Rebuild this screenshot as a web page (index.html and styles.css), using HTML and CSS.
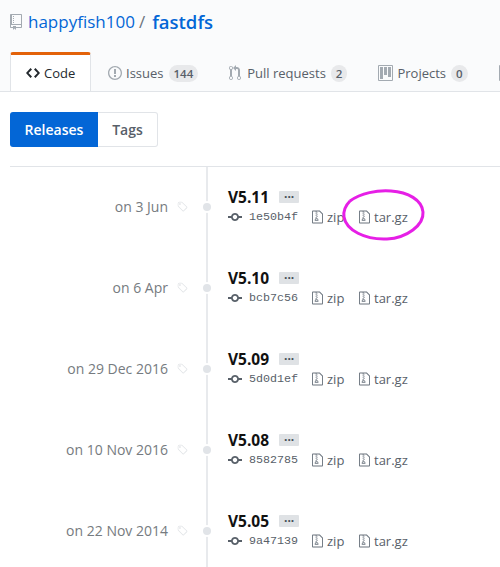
FILE: index.html
```html
<!DOCTYPE html>
<html lang="en">
<head>
    <meta charset="UTF-8">
    <meta name="viewport" content="width=device-width, initial-scale=1.0">
    <title>Releases - happyfish100/fastdfs</title>
    <link rel="stylesheet" href="styles.css">
</head>
<body>
<svg class="defs" aria-hidden="true">
    <symbol id="i-repo" viewBox="0 0 12 16"><path fill-rule="evenodd" d="M4 9H3V8h1v1zm0-3H3v1h1V6zm0-2H3v1h1V4zm0-2H3v1h1V2zm8-1v12c0 .55-.45 1-1 1H6v2l-1.5-1.5L3 16v-2H1c-.55 0-1-.45-1-1V1c0-.55.45-1 1-1h10c.55 0 1 .45 1 1zm-1 10H1v2h2v-1h3v1h5v-2zm0-10H2v9h9V1z"/></symbol>
    <symbol id="i-code" viewBox="0 0 14 16"><path fill-rule="evenodd" d="M9.5 3L8 4.5 11.5 8 8 11.5 9.5 13 14 8 9.5 3zm-5 0L0 8l4.5 5L6 11.5 2.5 8 6 4.5 4.5 3z"/></symbol>
    <symbol id="i-issue" viewBox="0 0 14 16"><path fill-rule="evenodd" d="M7 2.3c3.14 0 5.7 2.56 5.7 5.7s-2.56 5.7-5.7 5.7A5.71 5.71 0 0 1 1.3 8c0-3.14 2.56-5.7 5.7-5.7zM7 1C3.14 1 0 4.14 0 8s3.14 7 7 7 7-3.14 7-7-3.14-7-7-7zm1 3H6v5h2V4zm0 6H6v2h2v-2z"/></symbol>
    <symbol id="i-pull" viewBox="0 0 12 16"><path fill-rule="evenodd" d="M11 11.28V5c-.03-.78-.34-1.47-.94-2.06C9.46 2.35 8.78 2.03 8 2H7V0L4 3l3 3V4h1c.27.02.48.11.69.31.21.2.3.42.31.69v6.28A1.993 1.993 0 0 0 10 15a1.993 1.993 0 0 0 1-3.72zm-1 2.92c-.66 0-1.2-.55-1.2-1.2 0-.65.55-1.2 1.2-1.2.65 0 1.2.55 1.2 1.2 0 .65-.55 1.2-1.2 1.2zM4 3c0-1.11-.89-2-2-2a1.993 1.993 0 0 0-1 3.72v6.56A1.993 1.993 0 0 0 2 15a1.993 1.993 0 0 0 1-3.72V4.72c.59-.34 1-.98 1-1.72zm-.8 10c0 .66-.55 1.2-1.2 1.2-.65 0-1.2-.55-1.2-1.2 0-.65.55-1.2 1.2-1.2.65 0 1.2.55 1.2 1.2zM2 4.2C1.34 4.2.8 3.65.8 3c0-.65.55-1.2 1.2-1.2.65 0 1.2.55 1.2 1.2 0 .65-.55 1.2-1.2 1.2z"/></symbol>
    <symbol id="i-project" viewBox="0 0 15 16"><path fill-rule="evenodd" d="M10 12h3V2h-3v10zm-4-2h3V2H6v8zm-4 4h3V2H2v12zm-1 1h13V1H1v14zM14 0H1a1 1 0 0 0-1 1v14a1 1 0 0 0 1 1h13a1 1 0 0 0 1-1V1a1 1 0 0 0-1-1z"/></symbol>
    <symbol id="i-tag" viewBox="0 0 15 16"><path fill-rule="evenodd" d="M7.73 1.73C7.26 1.26 6.62 1 5.96 1H3.5C2.13 1 1 2.13 1 3.5v2.47c0 .66.27 1.3.73 1.77l6.06 6.06c.39.39 1.02.39 1.41 0l4.59-4.59a.996.996 0 0 0 0-1.41L7.73 1.73zM2.38 7.09c-.31-.3-.47-.7-.47-1.13V3.5c0-.88.72-1.59 1.59-1.59h2.47c.42 0 .83.16 1.13.47l6.14 6.13-4.73 4.73-6.13-6.15zM3.01 3h2v2H3V3h.01z"/></symbol>
    <symbol id="i-commit" viewBox="0 0 14 16"><path fill-rule="evenodd" d="M10.86 7c-.45-1.72-2-3-3.86-3-1.86 0-3.41 1.28-3.86 3H0v2h3.14c.45 1.72 2 3 3.86 3 1.86 0 3.41-1.28 3.86-3H14V7h-3.14zM7 10.2c-1.22 0-2.2-.98-2.2-2.2 0-1.22.98-2.2 2.2-2.2 1.22 0 2.2.98 2.2 2.2 0 1.22-.98 2.2-2.2 2.2z"/></symbol>
    <symbol id="i-zip" viewBox="0 0 12 16"><path fill-rule="evenodd" d="M8.5 1H1a1 1 0 0 0-1 1v12a1 1 0 0 0 1 1h10a1 1 0 0 0 1-1V4.5L8.5 1zM11 14H1V2h3v1h1V2h3l3 3v9zM5 4V3h1v1H5zM4 4h1v1H4V4zm1 2V5h1v1H5zM4 6h1v1H4V6zm1 2V7h1v1H5zM4 9.28A2 2 0 0 0 3 11v1h4v-1a2 2 0 0 0-2-2V8H4v1.28zM6 10v1H4v-1h2z"/></symbol>
</svg>

<!-- Repo header and tabs -->
<div class="repohead">
    <h1 class="repo-title">
        <svg class="icon icon-repo"><use href="#i-repo"/></svg>
        <a class="owner">happyfish100</a>
        <span class="slash">/</span>
        <a class="name">fastdfs</a>
    </h1>
    <nav class="tabs">
        <a class="tab selected"><svg class="icon icon-code"><use href="#i-code"/></svg>Code</a>
        <a class="tab"><svg class="icon icon-issue"><use href="#i-issue"/></svg>Issues<span class="counter">144</span></a>
        <a class="tab"><svg class="icon icon-pull"><use href="#i-pull"/></svg>Pull requests<span class="counter">2</span></a>
        <a class="tab"><svg class="icon icon-project"><use href="#i-project"/></svg>Projects<span class="counter">0</span></a>
        <a class="tab"><svg class="icon icon-project"><use href="#i-project"/></svg></a>
    </nav>
</div>

<div class="subnav">
    <a class="subnav-item active">Releases</a>
    <a class="subnav-item">Tags</a>
</div>

<!-- Release timeline -->
<div class="timeline">
    <div class="release">
        <div class="date">on 3 Jun</div>
        <svg class="icon icon-tag"><use href="#i-tag"/></svg>
        <span class="dot"></span>
        <div class="info">
            <div class="version"><a>V5.11</a><span class="more">&middot;&middot;&middot;</span></div>
            <div class="meta">
                <svg class="icon icon-commit"><use href="#i-commit"/></svg><code>1e50b4f</code>
                <a class="download"><svg class="icon icon-zip"><use href="#i-zip"/></svg>zip</a>
                <a class="download"><svg class="icon icon-zip"><use href="#i-zip"/></svg>tar.gz</a>
            </div>
        </div>
    </div>
    <div class="release">
        <div class="date">on 6 Apr</div>
        <svg class="icon icon-tag"><use href="#i-tag"/></svg>
        <span class="dot"></span>
        <div class="info">
            <div class="version"><a>V5.10</a><span class="more">&middot;&middot;&middot;</span></div>
            <div class="meta">
                <svg class="icon icon-commit"><use href="#i-commit"/></svg><code>bcb7c56</code>
                <a class="download"><svg class="icon icon-zip"><use href="#i-zip"/></svg>zip</a>
                <a class="download"><svg class="icon icon-zip"><use href="#i-zip"/></svg>tar.gz</a>
            </div>
        </div>
    </div>
    <div class="release">
        <div class="date">on 29 Dec 2016</div>
        <svg class="icon icon-tag"><use href="#i-tag"/></svg>
        <span class="dot"></span>
        <div class="info">
            <div class="version"><a>V5.09</a><span class="more">&middot;&middot;&middot;</span></div>
            <div class="meta">
                <svg class="icon icon-commit"><use href="#i-commit"/></svg><code>5d0d1ef</code>
                <a class="download"><svg class="icon icon-zip"><use href="#i-zip"/></svg>zip</a>
                <a class="download"><svg class="icon icon-zip"><use href="#i-zip"/></svg>tar.gz</a>
            </div>
        </div>
    </div>
    <div class="release">
        <div class="date">on 10 Nov 2016</div>
        <svg class="icon icon-tag"><use href="#i-tag"/></svg>
        <span class="dot"></span>
        <div class="info">
            <div class="version"><a>V5.08</a><span class="more">&middot;&middot;&middot;</span></div>
            <div class="meta">
                <svg class="icon icon-commit"><use href="#i-commit"/></svg><code>8582785</code>
                <a class="download"><svg class="icon icon-zip"><use href="#i-zip"/></svg>zip</a>
                <a class="download"><svg class="icon icon-zip"><use href="#i-zip"/></svg>tar.gz</a>
            </div>
        </div>
    </div>
    <div class="release">
        <div class="date">on 22 Nov 2014</div>
        <svg class="icon icon-tag"><use href="#i-tag"/></svg>
        <span class="dot"></span>
        <div class="info">
            <div class="version"><a>V5.05</a><span class="more">&middot;&middot;&middot;</span></div>
            <div class="meta">
                <svg class="icon icon-commit"><use href="#i-commit"/></svg><code>9a47139</code>
                <a class="download"><svg class="icon icon-zip"><use href="#i-zip"/></svg>zip</a>
                <a class="download"><svg class="icon icon-zip"><use href="#i-zip"/></svg>tar.gz</a>
            </div>
        </div>
    </div>
</div>

<!-- Hand-drawn highlight around the first tar.gz link -->
<svg class="scribble" width="86" height="56" viewBox="0 0 86 56">
    <path d="M9 14C20 6 36 3 50 4c17 1 31 9 32 21 1 13-16 26-36 27C24 53 5 43 3 30 2 23 5 18 9 14"/>
</svg>
</body>
</html>
```

FILE: styles.css
```css
* { box-sizing: border-box; }
html, body {
    overflow: hidden;
}
body {
    position: relative;
    width: 500px;
    height: 567px;
    margin: 0;
    font-family: "Open Sans", Arial, sans-serif;
    font-size: 14px;
    color: #24292e;
    background-color: #fff;
}
.defs {
    display: none;
}
.icon {
    display: inline-block;
    height: 16px;
    fill: currentColor;
    flex: none;
}

/* Repo header */
.repohead {
    height: 92px;
    padding-left: 10px;
    overflow: hidden;
    background-color: #fafbfc;
    border-bottom: 1px solid #e1e4e8;
}
.repo-title {
    display: flex;
    align-items: center;
    height: 43px;
    margin: 0;
    font-size: 17px;
    font-weight: 400;
    color: #0366d6;
}
.icon-repo {
    width: 12px;
    margin-right: 6px;
    color: #a3aab1;
}
.slash {
    margin: 0 7px 0 4px;
    color: #6a737d;
}
.name {
    font-size: 18.5px;
    font-weight: 600;
}
.tabs {
    display: flex;
    height: 40px;
    margin-top: 9px;
    font-size: 13px;
    white-space: nowrap;
}
.tab {
    display: flex;
    align-items: center;
    height: 40px;
    padding: 2px 14px 0 17px;
    color: #586069;
}
.tab .icon {
    margin-right: 4px;
    color: #a3aab1;
}
.tab .icon-pull {
    margin-right: 6px;
}
.tab.selected {
    width: 81px;
    height: 41px;
    padding: 0 15px 2px;
    color: #24292e;
    background-color: #fff;
    border: 1px solid #e1e4e8;
    border-top: 3px solid #e36209;
    border-bottom: 0;
    border-radius: 3px 3px 0 0;
}
.tab.selected .icon {
    color: #24292e;
}
.icon-code, .icon-issue, .icon-commit { width: 14px; }
.icon-pull { width: 12px; }
.icon-project { width: 15px; }
.counter {
    margin-left: 5px;
    padding: 0 5px;
    font-size: 11.5px;
    font-weight: 600;
    line-height: 17px;
    color: #586069;
    background-color: rgba(27, 31, 35, 0.08);
    border-radius: 20px;
}

/* Releases / Tags switch */
.subnav {
    display: flex;
    width: 148px;
    height: 35px;
    margin: 20px 0 0 10px;
}
.subnav-item {
    display: flex;
    align-items: center;
    justify-content: center;
    width: 60px;
    font-weight: 600;
    color: #586069;
    border: 1px solid #e1e4e8;
    border-left: 0;
    border-radius: 0 3px 3px 0;
}
.subnav-item.active {
    width: 88px;
    color: #fff;
    background-color: #0366d6;
    border: 0;
    border-radius: 3px 0 0 3px;
}

/* Timeline */
.timeline {
    position: relative;
    margin: 19px 0 0 10px;
    border-top: 1px solid #e1e4e8;
}
.timeline::before {
    content: "";
    position: absolute;
    top: 0;
    bottom: 0;
    left: 196px;
    width: 2px;
    background-color: #e8eaed;
}
.release {
    position: relative;
    display: flex;
    align-items: center;
    height: 81px;
    padding-bottom: 2px;
}
.date {
    width: 158px;
    font-size: 14px;
    text-align: right;
    color: #767b80;
    white-space: nowrap;
}
.icon-tag {
    width: 11px;
    margin-left: 9px;
    color: #dfe2e5;
}
.dot {
    position: relative;
    width: 8px;
    height: 8px;
    margin-left: 15px;
    background-color: #e1e4e8;
    border-radius: 50%;
    box-shadow: 0 0 0 2px #fff;
}
.info {
    margin-left: 17px;
}
.version {
    display: flex;
    align-items: center;
    height: 20px;
    font-size: 15.5px;
    font-weight: 700;
    color: #111;
}
.more {
    width: 20px;
    height: 12px;
    margin-left: 10px;
    font-size: 12px;
    line-height: 11px;
    text-align: center;
    color: #444d56;
    background-color: #dfe2e5;
    border-radius: 1px;
}
.meta {
    display: flex;
    align-items: center;
    height: 20px;
    font-size: 13px;
    color: #586069;
}
.meta code {
    width: 49px;
    margin: 0 14px 0 7px;
    font-family: "Liberation Mono", monospace;
    font-size: 11.7px;
}
.download {
    display: flex;
    align-items: center;
    width: 47px;
    white-space: nowrap;
}
.download .icon {
    width: 11px;
    margin-right: 4px;
    color: #6a737d;
}
.scribble {
    position: absolute;
    top: 187px;
    left: 341px;
}
.scribble path {
    fill: none;
    stroke: #e61fe6;
    stroke-width: 3;
}
```
